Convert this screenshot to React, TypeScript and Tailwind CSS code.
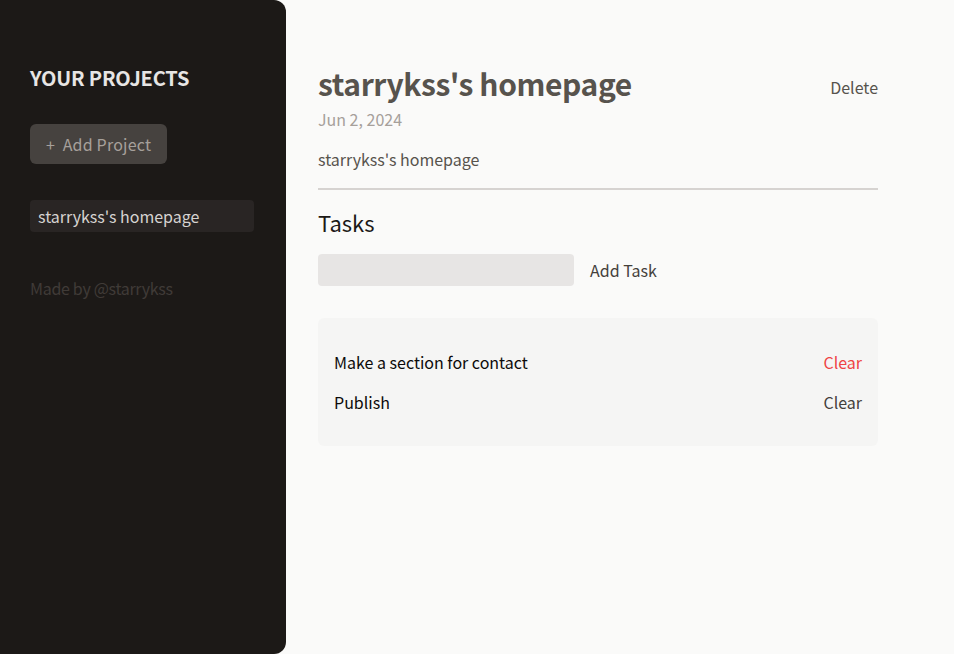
const tasks = [
    { id: 1, text: "Make a section for contact", hover: true },
    { id: 2, text: "Publish", hover: false },
]

const Sidebar = () => {
    return (
        <aside className="w-[286px] h-[654px] shrink-0 pl-[30px] pr-8 pt-16 bg-[#1c1917] text-stone-50 rounded-r-xl">
            <h2 className="mb-8 text-xl leading-7 font-bold uppercase text-stone-200 tracking-[-0.2px]">
                Your Projects
            </h2>
            <div>
                <button className="px-4 py-2 text-base leading-6 rounded-md bg-[#46423f] text-stone-400 tracking-[0.2px]">
                    +&nbsp; Add Project
                </button>
            </div>
            <ul className="mt-9">
                <li>
                    <button className="w-full text-left px-2 py-1 rounded-sm bg-[#292524] text-[#d6d3d1]">
                        starrykss's homepage
                    </button>
                </li>
            </ul>
            <p className="mt-11 text-[#403b37] tracking-[-0.3px]">Made by @starrykss</p>
        </aside>
    )
}

const Tasks = () => {
    return (
        <section>
            <h2 className="text-[22px] leading-9 text-stone-900 -mt-0.5 mb-[14px]">Tasks</h2>
            <div className="flex items-center gap-4">
                <input className="w-64 h-8 px-2 py-1 rounded-sm bg-[#e7e5e4] outline-none" />
                <button className="text-stone-700">Add Task</button>
            </div>
            <ul className="p-4 mt-8 rounded-md bg-[#f5f5f4]">
                {tasks.map((task) => (
                    <li key={task.id} className="flex justify-between my-4">
                        <span className="text-stone-950">{task.text}</span>
                        <button
                            className={
                                task.hover ? "text-[#ef4444]" : "text-stone-700"
                            }
                        >
                            Clear
                        </button>
                    </li>
                ))}
            </ul>
        </section>
    )
}

const SelectedProject = () => {
    return (
        <div className="w-[35rem] mt-16">
            <header className="pb-[17px] mb-4 border-b-2 border-[#d6d3d1]">
                <div className="flex items-center justify-between">
                    <h1 className="text-3xl font-bold text-stone-600 mb-2 pt-px tracking-[-0.4px]">
                        starrykss's homepage
                    </h1>
                    <button className="text-stone-600">Delete</button>
                </div>
                <p className="mb-4 text-stone-400 -mt-0.5">Jun 2, 2024</p>
                <p className="text-stone-600 whitespace-pre-wrap">
                    starrykss's homepage
                </p>
            </header>
            <Tasks />
        </div>
    )
}

export default function App() {
    return (
        <main
            className="h-[654px] flex gap-8 bg-[#fafaf9] overflow-hidden"
            style={{ fontFamily: '"Noto Sans CJK KR", "Noto Sans", sans-serif' }}
        >
            <Sidebar />
            <SelectedProject />
        </main>
    )
}
